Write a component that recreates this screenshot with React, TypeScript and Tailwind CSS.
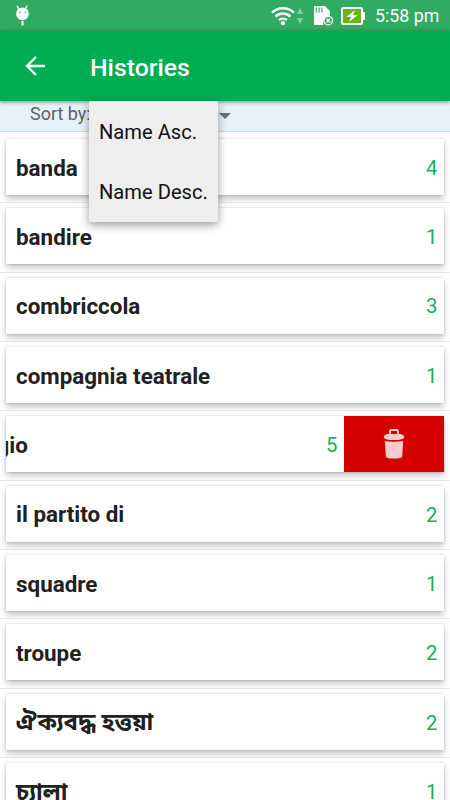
interface History {
  word: string;
  count: number;
  swiped?: boolean;
  bengali?: boolean;
}

const histories: History[] = [
  { word: 'banda', count: 4 },
  { word: 'bandire', count: 1 },
  { word: 'combriccola', count: 3 },
  { word: 'compagnia teatrale', count: 1 },
  { word: 'equipaggio', count: 5, swiped: true },
  { word: 'il partito di', count: 2 },
  { word: 'squadre', count: 1 },
  { word: 'troupe', count: 2 },
  { word: 'ঐক্যবদ্ধ হত্তয়া', count: 2, bengali: true },
  { word: 'চ্যালা', count: 1, bengali: true },
];

const sortOptions = ['Name Asc.', 'Name Desc.'];

function StatusBar() {
  return (
    <div className="flex h-[31px] shrink-0 items-center bg-[#30ab61] pr-[11px] pl-[15px] text-white">
      <svg className="h-[21px] w-[14px]" viewBox="0 0 14 21" fill="currentColor">
        <path d="M2 1.2l2 3M12 1.2l-2 3" stroke="currentColor" strokeWidth="1.3" strokeLinecap="round" />
        <circle cx="7.5" cy="8.8" r="6.4" />
        <path d="M6.5 15.8h2v4.6h-2z" />
        <circle cx="4.9" cy="7.2" r=".8" fill="#30ab61" />
        <circle cx="10.1" cy="7.2" r=".8" fill="#30ab61" />
      </svg>
      <svg className="ml-auto h-[22px] w-[24px]" viewBox="0 0 24 22" fill="none" stroke="currentColor" strokeWidth="2.4">
        <path d="M1 7.7a16 16 0 0122 0M4.5 11.5a11 11 0 0115 0M8 15.2a5.8 5.8 0 018 0" />
        <circle cx="12" cy="18.2" r="2.1" fill="currentColor" stroke="none" />
      </svg>
      <svg className="ml-[2px] h-[16px] w-[6px]" viewBox="0 0 6 16" fill="#83cda0">
        <path d="M3 0l3 6H0zM3 16l3-6H0z" />
      </svg>
      <svg className="ml-[10px] h-[21px] w-[21px]" viewBox="0 0 21 21" fill="currentColor">
        <path d="M1 1h11l5 5v6.4A5.4 5.4 0 0010.6 20H1z" />
        <path d="M3.3 2.5v5M6.1 2.5v5M8.9 2.5v5" stroke="#30ab61" strokeWidth="1.2" />
        <circle cx="15.2" cy="15.6" r="4.3" fill="#30ab61" stroke="currentColor" strokeWidth="1.3" />
        <path d="M13.5 13.9l3.4 3.4m0-3.4l-3.4 3.4" stroke="currentColor" strokeWidth="1.5" />
      </svg>
      <svg className="ml-[7px] h-[18px] w-[25px]" viewBox="0 0 25 18">
        <rect x="1" y="1" width="20" height="16" rx="1" fill="#66b512" stroke="white" strokeWidth="2" />
        <path d="M22 5h2v8h-2z" fill="white" />
        <path d="M14 3L5.5 10h4.7L8 15l8.7-7H12z" fill="white" />
      </svg>
      <span className="ml-[9px] w-[64px] pt-[1px] text-right text-[17.8px] leading-[22px] whitespace-nowrap">5:58 pm</span>
    </div>
  );
}

function SortMenu() {
  return (
    <div className="absolute top-0 left-[89px] z-20 h-[121px] w-[129px] rounded-[2px] bg-[#eeeeee] shadow-[0_3px_10px_rgba(0,0,0,0.4)]">
      {sortOptions.map((option) => (
        <div key={option} className="flex h-[60px] items-center pt-[3px] pl-[10px] text-[20.15px] whitespace-nowrap text-[#111111]">
          {option}
        </div>
      ))}
    </div>
  );
}

function HistoryRow({ word, count, swiped, bengali }: History) {
  return (
    <li className="h-[69.35px] shrink-0 border-b border-[#e8e8e8] px-[6px] pt-[5px]">
      <div className="flex h-[56px] overflow-hidden bg-white shadow-[0_4px_6px_rgba(0,0,0,0.22),0_0_2px_rgba(0,0,0,0.2)]">
        <div className={`flex w-full shrink-0 items-center justify-between pr-[6.5px] pl-[10px] ${swiped ? '-ml-[100px]' : ''}`}>
          <span className={`pt-[3px] font-bold text-[#212121] ${bengali ? 'text-[23.8px]' : 'text-[22.4px]'}`}>{word}</span>
          <span className="pt-[2px] text-[20.3px] text-[#12b060]">{count}</span>
        </div>
        {swiped && (
          <button className="flex w-[100px] shrink-0 items-center justify-center bg-[#d50000]" aria-label="Delete">
            <svg className="h-[30px] w-[22px]" viewBox="0 0 22 30" fill="#f8cccc">
              <path d="M7 5V2.2Q7 1 8.2 1h5.6Q15 1 15 2.2V5" fill="none" stroke="#f8cccc" strokeWidth="1.8" />
              <path d="M.6 8.2Q1 6 4 5h14q3 1 3.4 3.2Q21 11 11 11T.6 8.2z" />
              <path d="M1.8 12q9.2 1.5 18.4 0l-1 15q-.2 2.6-8.2 2.6t-8.2-2.6z" />
            </svg>
          </button>
        )}
      </div>
    </li>
  );
}

export default function App() {
  return (
    <div className="flex h-[800px] w-[450px] flex-col overflow-hidden bg-white font-[Roboto,'Noto_Sans_Bengali','Noto_Sans',sans-serif]">
      <StatusBar />
      <header className="relative z-10 flex h-[70px] shrink-0 items-center bg-[#00ad50] pl-[25px] text-white shadow-[0_1px_4px_rgba(0,0,0,0.45)]">
        <svg className="h-[20px] w-[20px]" viewBox="0 0 20 20" fill="none" stroke="currentColor" strokeWidth="2.4">
          <path d="M20 10H2M11 1l-9 9 9 9" />
        </svg>
        <h1 className="pt-[4px] pl-[45px] text-[24.8px] font-medium">Histories</h1>
      </header>
      <div className="relative z-20 h-0 shrink-0">
        <SortMenu />
      </div>
      <div className="flex h-[31px] shrink-0 border-b border-[#d3dde3] bg-[#e6f2f8] pl-[30px] text-[18px] text-[#616161]">
        <span className="pt-[1px] leading-[24px]">Sort by:</span>
        <svg className="mt-[12px] ml-[128px] h-[6px] w-[12px]" viewBox="0 0 12 6" fill="#6b7175">
          <path d="M0 0h12L6 6z" />
        </svg>
      </div>
      <ul className="flex flex-col pt-[2px]">
        {histories.map((history) => (
          <HistoryRow key={history.word} {...history} />
        ))}
      </ul>
    </div>
  );
}
